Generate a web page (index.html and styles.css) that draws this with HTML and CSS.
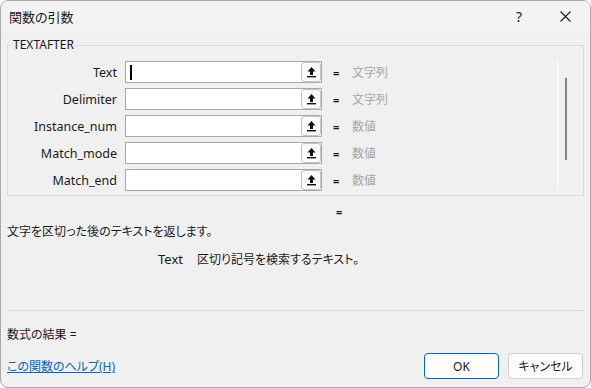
FILE: index.html
```html
<!DOCTYPE html>
<html lang="ja">
<head>
  <meta charset="UTF-8" />
  <title>関数の引数</title>
  <link rel="stylesheet" href="styles.css">
</head>
<body>

  <div class="window">
    <div class="title-bar">
      <span class="title">関数の引数</span>
      <span class="help-btn">?</span>
      <span class="close-btn">
        <svg width="11" height="11" viewBox="0 0 11 11"><path d="M0.5 0.5 L10.5 10.5 M10.5 0.5 L0.5 10.5" stroke="#1a1a1a" stroke-width="1.1"/></svg>
      </span>
    </div>

    <div class="content">
      <fieldset class="group">
        <legend>TEXTAFTER</legend>
        <div class="group-inner">
          <div class="args">
            <label>Text</label>
            <div class="arg-input"><span class="caret"></span><span class="ref-btn"></span></div>
            <span class="eq">=</span>
            <span class="arg-type">文字列</span>

            <label>Delimiter</label>
            <div class="arg-input"><span class="ref-btn"></span></div>
            <span class="eq">=</span>
            <span class="arg-type">文字列</span>

            <label>Instance_num</label>
            <div class="arg-input"><span class="ref-btn"></span></div>
            <span class="eq">=</span>
            <span class="arg-type">数値</span>

            <label>Match_mode</label>
            <div class="arg-input"><span class="ref-btn"></span></div>
            <span class="eq">=</span>
            <span class="arg-type">数値</span>

            <label>Match_end</label>
            <div class="arg-input"><span class="ref-btn"></span></div>
            <span class="eq">=</span>
            <span class="arg-type">数値</span>
          </div>
          <div class="scroll-track">
            <div class="scroll-thumb"></div>
          </div>
        </div>
      </fieldset>

      <div class="result-eq">=</div>
      <div class="func-desc">文字を区切った後のテキストを返します。</div>
      <div class="arg-desc"><span class="arg-name">Text</span>区切り記号を検索するテキスト。</div>

      <div class="separator"></div>

      <div class="formula-result">数式の結果 =</div>

      <div class="footer">
        <a class="help-link" href="#">この関数のヘルプ(H)</a>
        <div class="buttons">
          <button class="btn btn-ok">OK</button>
          <button class="btn">キャンセル</button>
        </div>
      </div>
    </div>
  </div>

  <script>
    // bouton de référence : icône flèche
    const arrow = '<svg width="11" height="12" viewBox="0 0 11 12"><path d="M5.5 1 L1.5 5.5 H4 V9 H7 V5.5 H9.5 Z" fill="#111"/><rect x="1" y="10" width="9" height="1.4" fill="#111"/></svg>';
    document.querySelectorAll(".ref-btn").forEach(b => { b.innerHTML = arrow; });
  </script>

</body>
</html>
```

FILE: styles.css
```css
body {
  margin: 0;
  background-color: #ffffff;
  font-family: "Noto Sans", "Noto Sans CJK JP", sans-serif;
  font-size: 12px;
  color: #1a1a1a;
  font-feature-settings: "palt";
}

.window {
  width: 591px;
  height: 388px;
  box-sizing: border-box;
  border: 1px solid #a9a9a9;
  border-radius: 8px;
  background-color: #f0f0f0;
  overflow: hidden;
  display: flex;
  flex-direction: column;
}

.title-bar {
  height: 30px;
  background-color: #f3f3f3;
  display: flex;
  align-items: center;
  padding-left: 8px;
  flex-shrink: 0;
}

.title {
  flex: 1;
  font-size: 13px;
}

.help-btn {
  width: 46px;
  text-align: center;
  font-size: 14px;
}

.close-btn {
  width: 46px;
  display: flex;
  justify-content: center;
  align-items: center;
  margin-right: 2px;
}

.content {
  padding: 0 6px 8px;
  flex: 1;
  display: flex;
  flex-direction: column;
}

.group {
  margin: 6px 0 0;
  padding: 8px 0 4px 0;
  border: 1px solid #dcdcdc;
  min-width: 0;
}

.group legend {
  padding: 0 1px;
  margin-left: 4px;
  line-height: 16px;
  font-size: 12px;
}

.group-inner {
  display: flex;
}

.args {
  display: grid;
  grid-template-columns: 109px 197px 38px 1fr;
  row-gap: 5px;
  grid-auto-rows: 22px;
  flex: 1;
  align-items: center;
}

.args label {
  text-align: right;
  font-size: 12.5px;
  grid-column: 1;
}

.arg-input {
  margin-left: 8px;
  margin-right: -8px;
  height: 22px;
  box-sizing: border-box;
  border: 1px solid #a8a8a8;
  background-color: #ffffff;
  display: flex;
  align-items: center;
  justify-content: flex-end;
  position: relative;
}

.caret {
  position: absolute;
  left: 4px;
  top: 3px;
  width: 2px;
  height: 15px;
  background-color: #000;
}

.ref-btn {
  width: 20px;
  height: 20px;
  box-sizing: border-box;
  border: 1px solid #c4c4c4;
  border-radius: 3px;
  background-color: #fbfbfb;
  display: flex;
  align-items: center;
  justify-content: center;
}

.eq {
  padding-left: 19px;
  font-weight: bold;
  font-size: 11px;
}

.arg-type {
  color: #a6a6a6;
  font-size: 12px;
}

.scroll-track {
  width: 24px;
  border-left: 1px solid #ffffff;
  margin-right: 1px;
  padding-top: 17px;
}

.scroll-thumb {
  width: 2px;
  height: 82px;
  background-color: #858585;
  margin-left: 7px;
}

.result-eq {
  margin-top: 8px;
  padding-left: 329px;
  font-weight: bold;
  font-size: 11px;
  line-height: 16px;
}

.func-desc {
  margin-top: 4px;
  line-height: 16px;
}

.arg-desc {
  margin-top: 11px;
  padding-left: 151px;
  line-height: 16px;
}

.arg-name {
  font-size: 13px;
  margin-right: 14px;
}

.separator {
  margin-top: 42px;
  border-top: 1px solid #d9d9d9;
  margin-right: 1px;
}

.formula-result {
  margin-top: 16px;
  line-height: 16px;
}

.footer {
  margin-top: auto;
  display: flex;
  align-items: center;
  justify-content: space-between;
}

.help-link {
  color: #0067c0;
  text-decoration: underline;
}

.buttons {
  display: flex;
  gap: 9px;
  margin-right: 1px;
}

.btn {
  width: 75px;
  height: 26px;
  border: 1px solid #d0d0d0;
  border-radius: 4px;
  background-color: #fdfdfd;
  font-family: "Noto Sans", "Noto Sans CJK JP", sans-serif;
  font-size: 12px;
  color: #1a1a1a;
  font-feature-settings: "palt";
  padding: 0;
}

.btn-ok {
  border-color: #0067c0;
}
```
